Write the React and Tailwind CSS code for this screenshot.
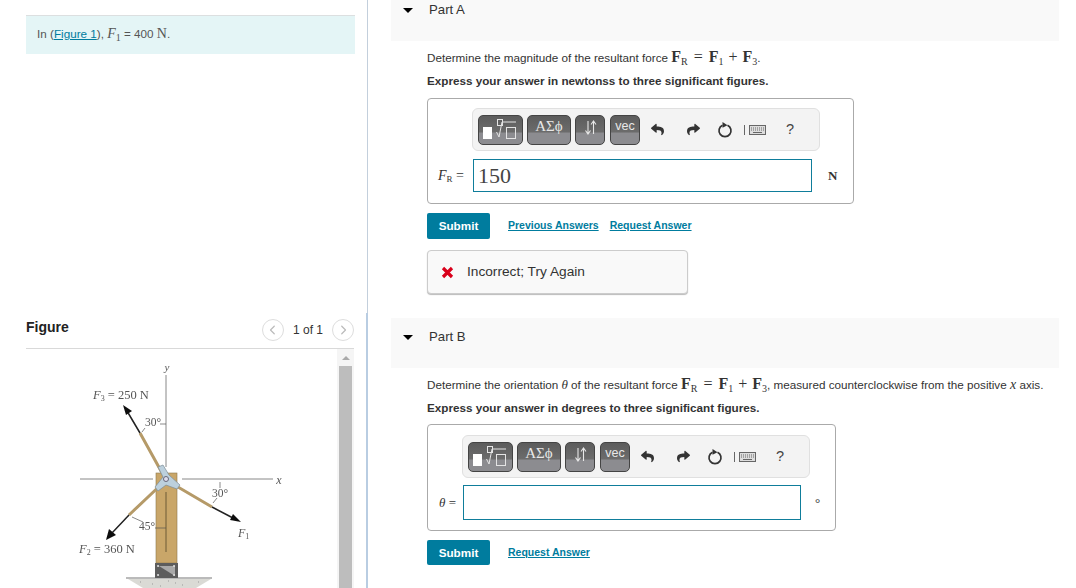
import { FaReply, FaShare } from "react-icons/fa";
import { FaChevronLeft, FaChevronRight } from "react-icons/fa6";

const serif = "font-['Liberation_Serif',serif]";

function PartHeader({ label, className }) {
  return (
    <div className={`bg-[#f9f9f9] pl-[12px] ${className}`}>
      <div className="flex h-[16px] items-center">
        <span className="h-0 w-0 border-x-[5px] border-t-[5px] border-x-transparent border-t-black"></span>
        <span className="ml-[16px] text-[13.2px] text-[#333]">{label}</span>
      </div>
    </div>
  );
}

function ForceEq() {
  return (
    <span className={`${serif} text-[16px]`}>
      <b>F</b>
      <sub className="text-[10px]">R</sub>
      <span className="mx-[6px]">=</span>
      <b>F</b>
      <sub className="text-[10px]">1</sub>
      <span className="mx-[5px]">+</span>
      <b>F</b>
      <sub className="text-[10px]">3</sub>
    </span>
  );
}

// the math toolbar, same for both parts
function Toolbar({ className }) {
  const btn =
    "flex h-[30px] items-center justify-center rounded-[5px] border border-[#444] bg-[linear-gradient(#5c5c5c_0%,#6c6c6c_58%,#8c8c90_60%,#8c8c90_100%)] text-[#e8e8e8]";
  return (
    <div
      className={`flex h-[43px] w-[348px] items-center rounded-[6px] border border-[#e0e0e0] bg-[#f3f3f3] pl-[5px] ${className}`}
    >
      <div className={`${btn} w-[45px] gap-[4px] pr-[1px]`}>
        <span className="mt-[7px] h-[12px] w-[9px] bg-white"></span>
        <svg width="21" height="22" viewBox="0 0 21 22" fill="none" stroke="#e4e4e4" strokeWidth="1">
          <rect x="1.5" y="0.5" width="5" height="6" />
          <path d="M0.5 13l2.5 5 3-15h14" />
          <rect x="10.5" y="8.5" width="9" height="11" />
        </svg>
      </div>
      <div className={`${btn} ml-[4px] w-[44px] ${serif} pb-[6px] text-[15px]`}>ΑΣϕ</div>
      <div className={`${btn} ml-[4px] w-[30px] pb-[5px]`}>
        <svg width="13" height="15" viewBox="0 0 13 15" fill="none" stroke="#e8e8e8" strokeWidth="1.1">
          <path d="M4 1V13.5M1.5 10.5L4 14L6.5 10.5M9.5 14V1.5M7 4.5L9.5 1L12 4.5" />
        </svg>
      </div>
      <div className={`${btn} ml-[5px] w-[30px] pb-[6px] text-[12.5px]`}>vec</div>
      <FaReply className="ml-[11px] text-[13px] text-[#333]" />
      <FaShare className="ml-[23px] text-[13px] text-[#333]" />
      <svg className="ml-[17px]" width="16" height="18" viewBox="0 0 16 18" fill="none">
        <path d="M10.5 4.2a6 6 0 1 1-5 0" stroke="#333" strokeWidth="1.7" />
        <path d="M5.5 1l5 3.2-5 2.6z" fill="#333" />
      </svg>
      <span className="ml-[11px] h-[10px] w-px bg-[#666]"></span>
      <svg className="ml-[4px]" width="17" height="10" viewBox="0 0 17 10">
        <rect x="0.5" y="0.5" width="16" height="9" fill="#ddd" stroke="#666" />
        <path d="M2 3h13M2 5h13" stroke="#666" strokeDasharray="1 1" />
        <path d="M4 7.5h9" stroke="#666" />
      </svg>
      <span className="ml-[20px] text-[14.5px] text-[#444]">?</span>
    </div>
  );
}

function SubmitButton() {
  return (
    <button className="h-full w-[63px] rounded-[2px] bg-[#007c9e] text-[11.7px] font-bold text-white">
      Submit
    </button>
  );
}

function Link({ children, className }) {
  return (
    <a className={`text-[10.5px] font-bold text-[#007c9e] underline ${className}`}>{children}</a>
  );
}

// vector figure of the post with three forces
function ForceFigure() {
  const txt = { fontFamily: "Liberation Serif, serif", fill: "#555" };
  const rod = "#b59a68";
  return (
    <svg width="311" height="239" viewBox="26 349 311 239" style={{ display: "block" }}>
      <filter id="soft">
        <feGaussianBlur stdDeviation="0.3" />
      </filter>
      <g filter="url(#soft)">
        <path d="M166 375V467M80 479H153M182 479H273" stroke="#888" strokeWidth="1" />
        <path d="M126 578H212" stroke="#777" strokeWidth="1" />
        <path d="M128 579H211L196 588H143Z" fill="#dadad5" />
        <path d="M140 582h1M152 584h1M168 581h1M182 585h1M198 582h1M160 586h1M175 583h1" stroke="#999" />
        <rect x="156" y="473" width="21" height="90" fill="#c9a669" stroke="#8d7a50" strokeWidth="0.6" />
        <path d="M166 492V552" stroke="#6c5a36" strokeWidth="1" />
        <rect x="155" y="563" width="23" height="15" fill="#5d5d5d" />
        <path d="M159 566L175 576V566Z" fill="#a9a9a9" />
        <path d="M158 566h.1M174 566h.1M158 575h.1M174 575h.1" stroke="#ddd" strokeWidth="2" strokeLinecap="round" />
        <path d="M166 480L140 433M166 480L212 507M166 480L129 515" stroke={rod} strokeWidth="3" />
        <path d="M140 433L127 411M212 507L233 518M129 515L112 533" stroke="#222" strokeWidth="1.5" />
        <path d="M123 405L132 411L126 415ZM241 522L230 520L233 514ZM106 540L109 529L116 535Z" fill="#111" />
        <path d="M158 467L163 465L169 475L180 485L177 489L166 485L158 491L155 487L163 477Z" fill="#bcd0dd" stroke="#7d8c96" strokeWidth="0.7" />
        <circle cx="166" cy="479" r="2.5" fill="#dde" stroke="#667" strokeWidth="1" />
        <path d="M142 432L145 428M160 424H166M132 517L143 522M155 528H166M220 482V488M217 498L213 503" stroke="#555" strokeWidth="0.7" />
        <text x="167" y="371" fontSize="11" fontStyle="italic" style={txt} textAnchor="middle">y</text>
        <text x="279" y="484" fontSize="12" fontStyle="italic" style={txt} textAnchor="middle">x</text>
        <text x="93" y="399" fontSize="12.5" style={txt}><tspan fontStyle="italic">F</tspan><tspan fontSize="8" dy="2">3</tspan><tspan dy="-2"> = 250 N</tspan></text>
        <text x="79" y="553" fontSize="12.5" style={txt}><tspan fontStyle="italic">F</tspan><tspan fontSize="8" dy="2">2</tspan><tspan dy="-2"> = 360 N</tspan></text>
        <text x="238" y="537" fontSize="12" style={txt}><tspan fontStyle="italic">F</tspan><tspan fontSize="8" dy="2">1</tspan></text>
        <text x="145" y="426" fontSize="11.5" style={txt}>30°</text>
        <text x="212" y="497" fontSize="11.5" style={txt}>30°</text>
        <text x="139" y="530" fontSize="11.5" style={txt}>45°</text>
      </g>
    </svg>
  );
}

export default function App() {
  return (
    <div className="flex h-[588px] w-[1076px] overflow-hidden bg-white font-['Liberation_Sans',sans-serif] text-[11.7px] text-[#333]">
      {/* left column */}
      <div className="flex w-[366px] flex-none flex-col pl-[26px]">
        <div className="mt-[15px] flex h-[39px] w-[329px] flex-none items-center border-t border-[#dcdfe0] bg-[#e4f5f6] pb-[3px] pl-[11px] text-[#555]">
          <span>
            In (<a className="text-[#007c9e] underline">Figure 1</a>),{" "}
            <span className={`${serif} text-[14px] italic`}>F</span>
            <sub className={`${serif} text-[10px]`}>1</sub> = 400 <span className={`${serif} text-[14px]`}>N</span>.
          </span>
        </div>
        <div className="mt-[264px] flex h-[31px] w-[328px] flex-none items-center border-b border-[#d9d9d9] pb-[6px]">
          <span className="mb-[6px] text-[14px] font-bold text-[#222]">Figure</span>
          <span className="ml-auto flex h-[22px] w-[22px] items-center justify-center rounded-full border border-[#ddd] text-[10px] text-[#bbb]">
            <FaChevronLeft />
          </span>
          <span className="mx-[9px] text-[12px]">1 of 1</span>
          <span className="flex h-[22px] w-[22px] items-center justify-center rounded-full border border-[#ddd] text-[10px] text-[#bbb]">
            <FaChevronRight />
          </span>
        </div>
        <div className="flex">
          <ForceFigure />
          <div className="flex w-[17px] flex-col items-center bg-[#f5f5f5] pt-[7px]">
            <span className="h-0 w-0 border-x-[4px] border-b-[4px] border-x-transparent border-b-[#aaa]"></span>
            <div className="mt-[6px] h-[230px] w-[13px] bg-[#bdbdbd]"></div>
          </div>
        </div>
      </div>

      {/* divider between the columns */}
      <div className="flex w-[2px] flex-none flex-col">
        <div className="ml-[1px] h-[313px] w-px bg-[#c3cfdc]"></div>
        <div className="h-[275px] w-[2px] bg-[#b9cde2]"></div>
      </div>

      {/* right column */}
      <div className="ml-[23px] w-[668px]">
        <PartHeader label="Part A" className="h-[41px] pt-[2px]" />
        <div className="pl-[36px]">
          <p className="mt-[8px] h-[16px] leading-[16px]">
            Determine the magnitude of the resultant force <ForceEq />.
          </p>
          <p className="mt-[8px] h-[16px] font-bold leading-[16px]">
            Express your answer in newtonss to three significant figures.
          </p>
          <div className="mt-[9px] h-[106px] w-[427px] rounded-[4px] border border-[#aaa]">
            <Toolbar className="ml-[44px] mt-[9px]" />
            <div className="mt-[8px] flex items-center">
              <span className={`ml-[10px] w-[35px] ${serif} text-[14px]`}>
                <i>F</i>
                <sub className="text-[9px]">R</sub> =
              </span>
              <div className={`h-[33px] w-[339px] border border-[#0f7d9b] pl-[4px] ${serif} text-[22px] leading-[31px] text-[#444]`}>
                150
              </div>
              <span className={`ml-[16px] ${serif} text-[13px] font-bold`}>N</span>
            </div>
          </div>
          <div className="mt-[9px] flex h-[26px] items-center">
            <SubmitButton />
            <Link className="ml-[18px]">Previous Answers</Link>
            <Link className="ml-[11px]">Request Answer</Link>
          </div>
          <div className="mt-[11px] flex h-[44px] w-[261px] items-center rounded-[4px] border border-[#ccc] bg-[#f9f9f9] pl-[13px] pt-[1px] shadow-[0_1px_1px_#bbb]">
            <svg width="13" height="13" viewBox="0 0 13 13">
              <path d="M2 2L11 11M11 2L2 11" stroke="#d9001b" strokeWidth="3.2" />
            </svg>
            <span className="ml-[13px] text-[13.7px] text-[#333]">Incorrect; Try Again</span>
          </div>
        </div>

        <PartHeader label="Part B" className="mt-[24px] h-[50px] pt-[11px]" />
        <div className="pl-[36px]">
          <p className="mt-[8px] h-[16px] whitespace-nowrap leading-[16px]">
            Determine the orientation <i className={`${serif} text-[13px]`}>θ</i> of the resultant force <ForceEq />, measured counterclockwise from the positive <i className={`${serif} text-[14px]`}>x</i> axis.
          </p>
          <p className="mt-[8px] h-[16px] font-bold leading-[16px]">
            Express your answer in degrees to three significant figures.
          </p>
          <div className="mt-[8px] h-[107px] w-[409px] rounded-[4px] border border-[#aaa]">
            <Toolbar className="ml-[34px] mt-[10px]" />
            <div className="mt-[7px] flex items-center">
              <span className={`ml-[11px] w-[24px] ${serif} text-[13px]`}>
                <i>θ</i> =
              </span>
              <div className="h-[35px] w-[338px] border border-[#0f7d9b]"></div>
              <span className={`ml-[14px] ${serif} text-[13px]`}>°</span>
            </div>
          </div>
          <div className="mt-[9px] flex h-[25px] items-center">
            <SubmitButton />
            <Link className="ml-[18px]">Request Answer</Link>
          </div>
        </div>
      </div>
    </div>
  );
}
